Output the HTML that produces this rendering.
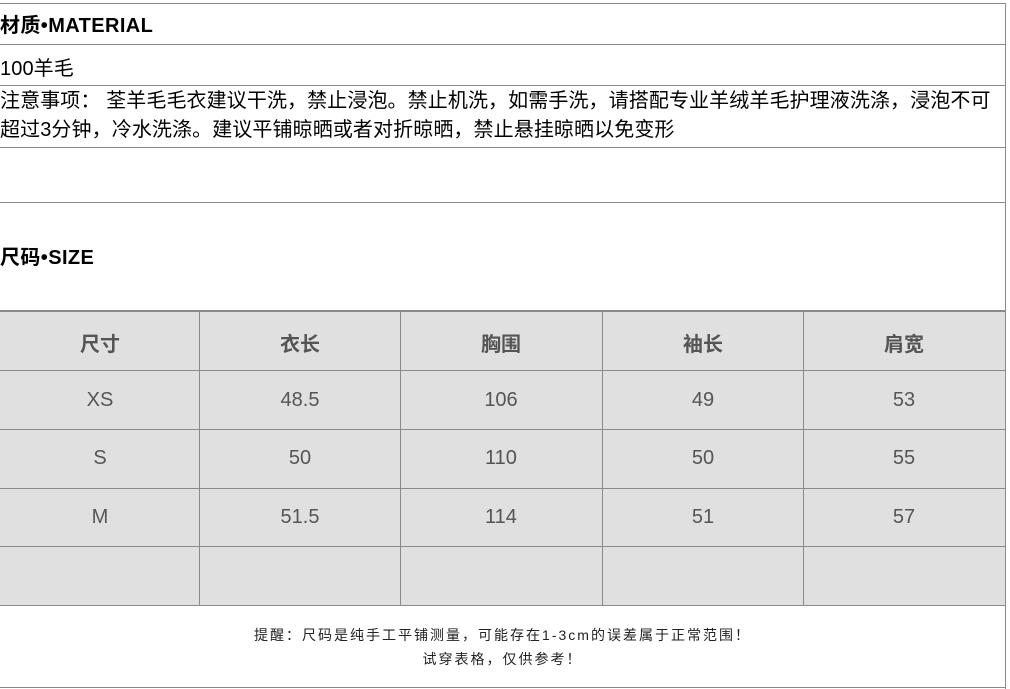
<!DOCTYPE html>
<html><head><meta charset="utf-8"><style>
*{margin:0;padding:0;box-sizing:border-box}
body{width:1010px;height:689px;background:#fff;position:relative;overflow:hidden;font-family:"Liberation Sans","Noto Sans CJK SC",sans-serif;color:#000}
.h{position:absolute;left:0;width:1006px;height:1px;background:#8a8a8a}
.v{position:absolute;width:1px;background:#8a8a8a}
.t{position:absolute;left:0;font-size:20px;letter-spacing:0.1px;white-space:nowrap}
.b{font-weight:bold;letter-spacing:0.4px}
.tbl{position:absolute;left:0;top:311px;width:1005px;height:294px;background:#e0e0e0}
.c{position:absolute;text-align:center;font-size:20px;color:#555;width:200px}
.hd{font-weight:bold}
.note{position:absolute;left:0;width:1005px;text-align:center;font-size:14px;letter-spacing:2px;color:#222}
</style></head><body>
<div class="v" style="left:1005px;top:3px;height:686px"></div>
<div class="h" style="top:3px"></div>
<div class="t b" style="top:9px">材质•MATERIAL</div>
<div class="h" style="top:44px"></div>
<div class="t" style="top:52px">100羊毛</div>
<div class="h" style="top:85px"></div>
<div class="t" style="top:87px;line-height:29px">注意事项： 荃羊毛毛衣建议干洗，禁止浸泡。禁止机洗，如需手洗，请搭配专业羊绒羊毛护理液洗涤，浸泡不可<br>超过3分钟，冷水洗涤。建议平铺晾晒或者对折晾晒，禁止悬挂晾晒以免变形</div>
<div class="h" style="top:147px"></div>
<div class="h" style="top:202px"></div>
<div class="t b" style="top:241px">尺码•SIZE</div>
<div class="tbl"></div>
<div class="h" style="top:310px;height:2px"></div>
<div class="h" style="top:370px"></div>
<div class="h" style="top:429px"></div>
<div class="h" style="top:488px"></div>
<div class="h" style="top:546px"></div>
<div class="h" style="top:605px"></div>
<div class="v" style="left:199px;top:311px;height:294px"></div>
<div class="v" style="left:400px;top:311px;height:294px"></div>
<div class="v" style="left:602px;top:311px;height:294px"></div>
<div class="v" style="left:803px;top:311px;height:294px"></div>
<div class="c hd" style="left:0;top:328px">尺寸</div>
<div class="c hd" style="left:200px;top:328px">衣长</div>
<div class="c hd" style="left:401px;top:328px">胸围</div>
<div class="c hd" style="left:603px;top:328px">袖长</div>
<div class="c hd" style="left:804px;top:328px">肩宽</div>
<div class="c" style="left:0;top:389px">XS</div>
<div class="c" style="left:200px;top:389px">48.5</div>
<div class="c" style="left:401px;top:389px">106</div>
<div class="c" style="left:603px;top:389px">49</div>
<div class="c" style="left:804px;top:389px">53</div>
<div class="c" style="left:0;top:447px">S</div>
<div class="c" style="left:200px;top:447px">50</div>
<div class="c" style="left:401px;top:447px">110</div>
<div class="c" style="left:603px;top:447px">50</div>
<div class="c" style="left:804px;top:447px">55</div>
<div class="c" style="left:0;top:506px">M</div>
<div class="c" style="left:200px;top:506px">51.5</div>
<div class="c" style="left:401px;top:506px">114</div>
<div class="c" style="left:603px;top:506px">51</div>
<div class="c" style="left:804px;top:506px">57</div>
<div class="note" style="top:625px">提醒：尺码是纯手工平铺测量，可能存在1-3cm的误差属于正常范围！</div>
<div class="note" style="top:649px">试穿表格，仅供参考！</div>
<div class="h" style="top:687px"></div>
</body></html>
